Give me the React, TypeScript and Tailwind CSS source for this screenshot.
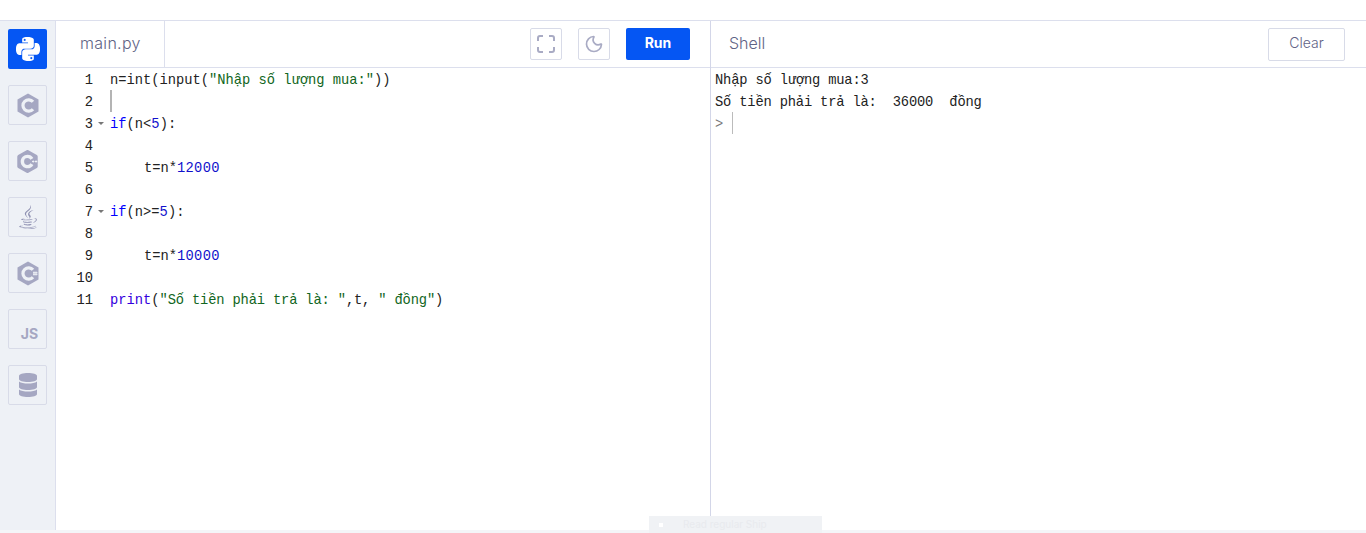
import React from "react";
import { SiPython, SiCplusplus } from "react-icons/si";
import { FaJava } from "react-icons/fa";
import { Moon } from "lucide-react";

const mono = "font-['Liberation_Mono',monospace] text-[13.75px] leading-[26px] whitespace-pre";
const K = ({ children }: { children: React.ReactNode }) => <span className="text-[#0000ff]">{children}</span>;
const B = ({ children }: { children: React.ReactNode }) => <span className="text-[#3300dd]">{children}</span>;
const N = ({ children }: { children: React.ReactNode }) => <span className="text-[#1111cc] tracking-[0.3px]">{children}</span>;
const S = ({ children }: { children: React.ReactNode }) => <span className="text-[#116622]">{children}</span>;

const lines: { fold?: boolean; code: React.ReactNode }[] = [
  { code: <>n=int(input(<S>"Nhập số lượng mua:"</S>))</> },
  { code: <span className="block w-[2px] h-[22px] bg-[#b4b4b4]" /> },
  { fold: true, code: <><K>if</K>(n&lt;<N>5</N>):</> },
  { code: "" },
  { code: <span className="pl-px">    t=n*<N>12000</N></span> },
  { code: "" },
  { fold: true, code: <><K>if</K>(n&gt;=<N>5</N>):</> },
  { code: "" },
  { code: <span className="pl-px">    t=n*<N>10000</N></span> },
  { code: "" },
  { code: <><B>print</B>(<span className="tracking-[-0.15px]"><S>"Số tiền phải trả là: "</S>,t, <S>" đồng"</S></span>)</> },
];

const Hex = ({ kind }: { kind: "c" | "cs" }) => (
  <svg width="22" height="25" viewBox="0 0 22 25">
    <path fill="currentColor" d="M11 0.5l10.5 6v12l-10.500 6L0.5 18.500V6.500z" />
    <path fill="none" stroke="#eef1f6" strokeWidth="3.200" d="M16 8.800a5.700 5.700 0 1 0 0 7.400" />
    {kind === "cs" && (
      <path fill="none" stroke="#eef1f6" strokeWidth="1" d="M17 10.500v4M19 10.500v4M16 11.700h4.500M16 13.300h4.500" />
    )}
  </svg>
);

const Db = () => (
  <svg width="18" height="24" viewBox="0 0 18 24" fill="currentColor">
    <path d="M0 3c0-2 4-3 9-3s9 1 9 3v3c0 2-4 3-9 3S0 8 0 6z" />
    <path d="M0 8.500c2 1.500 5 2 9 2s7-.5 9-2V14c0 2-4 3-9 3s-9-1-9-3z" />
    <path d="M0 16.500c2 1.500 5 2 9 2s7-.5 9-2V21c0 2-4 3-9 3s-9-1-9-3z" />
  </svg>
);

const side = [
  <Hex kind="c" />,
  <SiCplusplus size={23} />,
  <FaJava size={24} className="text-[#8f91b2]" />,
  <Hex kind="cs" />,
  <span className="font-['Inter',sans-serif] font-bold text-[14px] mt-2 ml-1">JS</span>,
  <Db />,
];

export default function App() {
  return (
    <div className="relative h-[533px] overflow-hidden bg-white pt-5 font-['Inter',sans-serif]">
      <div className="flex h-[510px] border-t border-[#dcdfed]">
        <aside className="w-14 shrink-0 bg-[#eef1f6] border-r border-[#dcdfed] pl-2 pt-2 flex flex-col gap-4">
          <div className="w-[39px] h-10 rounded-[2px] bg-[#0556f3] text-white flex items-center justify-center">
            <SiPython size={24} />
          </div>
          {side.map((icon, i) => (
            <div key={i} className="w-[39px] h-10 rounded-[2px] border border-[#d8dbe8] text-[#a5a7c2] flex items-center justify-center">
              {icon}
            </div>
          ))}
        </aside>

        <section className="w-[655px] shrink-0 border-r border-[#d3d6e8] flex flex-col">
          <header className="h-[47px] shrink-0 border-b border-[#dcdfed] flex items-center pr-5">
            <div className="w-[109px] h-[46px] border-r border-[#dcdfed] flex items-center pl-[24px] pb-[2px] text-base font-light tracking-[0.3px] text-[#5f6385]">
              main.py
            </div>
            <div className="ml-auto flex items-center gap-4">
              <button className="w-8 h-8 rounded-[2px] border border-[#d8dbe8] flex items-center justify-center">
                <svg width="18" height="18" viewBox="0 0 18 18" fill="none" stroke="#a9abc4" strokeWidth="2">
                  <path d="M1 6V3a2 2 0 0 1 2-2h3M12 1h3a2 2 0 0 1 2 2v3M17 12v3a2 2 0 0 1-2 2h-3M6 17H3a2 2 0 0 1-2-2v-3" />
                </svg>
              </button>
              <button className="w-8 h-8 rounded-[2px] border border-[#d8dbe8] text-[#a9abc4] flex items-center justify-center">
                <Moon size={20} />
              </button>
              <button className="w-16 h-8 rounded-[2px] bg-[#0556f3] text-white text-sm font-bold pb-[2px]">Run</button>
            </div>
          </header>
          <div className="text-[#222222]">
            {lines.map((l, i) => (
              <div key={i} className={`flex h-[22px] ${mono}`}>
                <span className="w-[37px] text-right">{i + 1}</span>
                <span className="w-[17px] flex items-start pt-[10px] pl-[5px]">
                  {l.fold && <span className="w-0 h-0 border-x-[3px] border-t-[3px] border-x-transparent border-t-[#777777]" />}
                </span>
                <span>{l.code}</span>
              </div>
            ))}
          </div>
        </section>

        <section className="flex-1 flex flex-col min-w-0">
          <header className="h-[47px] shrink-0 border-b border-[#dcdfed] flex items-center justify-between pl-[18px] pr-[21px]">
            <span className="text-base font-light text-[#5f6385] mb-[2px]">Shell</span>
            <button className="w-[77px] h-[33px] rounded-[2px] border border-[#d8dbe8] text-sm font-light text-[#5f6385] pb-[2px]">Clear</button>
          </header>
          <div className={`pl-1 text-[#222222] tracking-[-0.17px] ${mono}`}>
            <div className="h-[22px]">Nhập số lượng mua:3</div>
            <div className="h-[22px]">Số tiền phải trả là:  36000  đồng</div>
            <div className="h-[22px] flex">
              <span className="text-[#777777] w-[17px]">&gt;</span>
              <span className="w-px h-[22px] bg-[#bbbbbb]" />
            </div>
          </div>
        </section>
      </div>
      <div className="h-[3px] bg-[#f4f5f8]" />
      <div className="absolute left-[649px] top-[516px] w-[173px] h-[17px] bg-[#f0f2f5] flex items-center pl-[10px] gap-5 text-[10px] text-[#e8eaee]">
        <span className="w-1 h-1 bg-white" />
        <span>Read regular Ship</span>
      </div>
    </div>
  );
}
